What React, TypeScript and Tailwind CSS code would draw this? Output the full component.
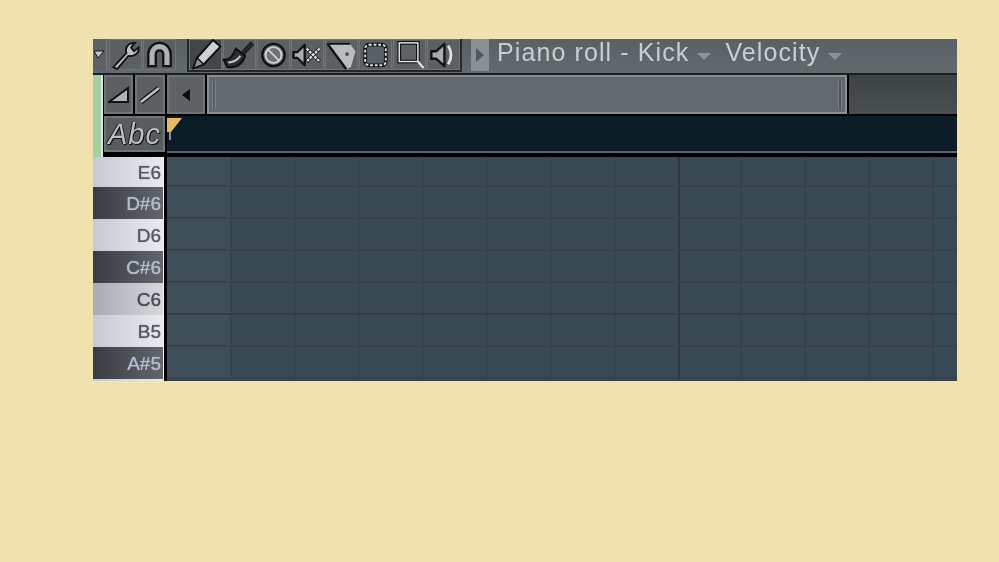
import React from 'react';

const keys = [
  { label: 'E6', h: 'h-[30px]', tone: 'white' },
  { label: 'D#6', h: 'h-[32px]', tone: 'black' },
  { label: 'D6', h: 'h-[32px]', tone: 'white' },
  { label: 'C#6', h: 'h-[32px]', tone: 'black' },
  { label: 'C6', h: 'h-[32px]', tone: 'grey' },
  { label: 'B5', h: 'h-[32px]', tone: 'white' },
  { label: 'A#5', h: 'h-[32px]', tone: 'black' },
  { label: '', h: 'h-[2px]', tone: 'white' },
];

const toneClass: Record<string, string> = {
  white: 'bg-gradient-to-r from-[#c6cad0] to-[#e8eaf0] text-[#565a66]',
  black: 'bg-gradient-to-r from-[#3a3c42] to-[#62666c] text-[#b4bece]',
  grey: 'bg-gradient-to-r from-[#a8abb0] to-[#d6d8dc] text-[#464c58]',
};

const columns = [65, 64, 64, 64, 64, 64, 64, 64, 62, 64, 64, 64, 64, 22];
const rowHeights = [30, 32, 32, 32, 32, 32, 32, 2];

const ToolButton = ({ active, children }: { active?: boolean; children: React.ReactNode }) => (
  <div
    className={
      'flex h-[31px] w-[33px] shrink-0 items-center justify-center border border-[#6e7478] ' +
      (active ? 'bg-[#41464a]' : 'bg-[#5a6064]')
    }
  >
    <svg viewBox="0 0 30 30" className="h-[28px] w-[29px] overflow-visible" fill="none">
      {children}
    </svg>
  </div>
);

const SpeakerShape = () => (
  <path d="M2 11h5l9-8v24l-9-8H2z" fill="#a6abaf" stroke="#101214" strokeWidth="2.5" strokeLinejoin="round" />
);

const Caret = () => (
  <svg viewBox="0 0 14 8" className="h-[8px] w-[14px]">
    <path d="M0 1h14L7 8z" fill="#8d9499" />
  </svg>
);

export default function App() {
  return (
    <div className="h-[562px] w-[999px] overflow-hidden bg-[#efe2b0] pl-[93px] pt-[39px] font-['Liberation_Sans',sans-serif]">
      <div className="flex h-[342px] w-[864px] flex-col overflow-hidden bg-black blur-[0.4px]">
        {/* Toolbar */}
        <div className="flex h-[34px] items-start bg-gradient-to-b from-[#5a6165] to-[#636a6e]">
          <div className="flex h-[31px] w-[14px] shrink-0 items-center justify-end border-r border-[#777d81] bg-[#5c6266]">
            <svg viewBox="0 0 12 10" className="h-[10px] w-[12px]">
              <path d="M0 1h10L4 8z" fill="#c4c8ca" stroke="#111" />
            </svg>
          </div>
          <div className="ml-[2px] flex shrink-0 gap-[1px]">
            <ToolButton>
              <path d="M2 28 16 13c-2-6 2-11 9-11l-4 5 3 4 5-4c1 6-5 10-11 9L6 30z" fill="#bcc1c4" stroke="#101214" strokeWidth="2" />
            </ToolButton>
            <ToolButton>
              <path d="M3 27V14a12 12 0 0 1 24 0v13h-8V14a4 4 0 0 0-8 0v13z" fill="#aeb3b6" stroke="#101214" strokeWidth="2.5" />
            </ToolButton>
          </div>
          <div className="ml-[11px] flex h-[33px] shrink-0 gap-[1px] border-x-2 border-b-2 border-[#25282b]">
            <ToolButton active>
              <path d="m2 29 4-11L23-1l8 7-18 19z" fill="#ccd1d4" stroke="#0c0e10" strokeWidth="2" />
              <path d="m2 29 4-11 7 7z" fill="#8b9093" stroke="#0c0e10" strokeWidth="1.5" />
            </ToolButton>
            <ToolButton>
              <path d="m16 13 11-12 3 3-11 12z" fill="#25282a" stroke="#0c0e10" />
              <path d="M-2 20c6 1 10-4 13-12l10 8c-3 9-10 13-19 12z" fill="#2c2f32" stroke="#0c0e10" strokeWidth="2" />
              <path d="M3 23c6 0 10-3 13-7" stroke="#c4c9cc" strokeWidth="2" />
            </ToolButton>
            <ToolButton>
              <circle cx="15" cy="15" r="12" stroke="#101214" strokeWidth="2.5" fill="#6d7377" />
              <circle cx="15" cy="15" r="8.5" stroke="#d0d4d6" strokeWidth="2" />
              <path d="m9 9 12 12" stroke="#d0d4d6" strokeWidth="2" />
            </ToolButton>
            <ToolButton>
              <path d="M0 12h4l8-8v22l-8-8H0z" fill="#a6abaf" stroke="#101214" strokeWidth="2.5" strokeLinejoin="round" />
              <path d="m14 8 14 14M28 8 14 22" stroke="#101214" strokeWidth="4" />
              <path d="m14 8 14 14M28 8 14 22" stroke="#dde0e2" strokeWidth="2.5" strokeDasharray="3 1" />
            </ToolButton>
            <ToolButton>
              <path d="M0 3h24l6 8-5 17-5 2z" fill="#b8bdc0" />
              <path d="M0 3 20 30" stroke="#101214" strokeWidth="2.5" />
              <path d="M0 3h24" stroke="#101214" strokeWidth="2" />
              <circle cx="21" cy="14" r="2" fill="#4a4f52" />
            </ToolButton>
            <ToolButton>
              <rect x="4" y="4" width="22" height="22" rx="4" stroke="#101214" strokeWidth="4" />
              <rect x="4" y="4" width="22" height="22" rx="4" stroke="#dde0e2" strokeWidth="2" strokeDasharray="3 2" />
            </ToolButton>
            <ToolButton>
              <rect x="4" y="2" width="20" height="20" fill="#5d6367" stroke="#101214" strokeWidth="4" />
              <rect x="4" y="2" width="20" height="20" stroke="#dde0e2" strokeWidth="1.6" />
              <path d="m24 22 6 7" stroke="#dde0e2" strokeWidth="2.5" />
            </ToolButton>
            <ToolButton>
              <SpeakerShape />
              <path d="M20 5c4 6 4 14 0 20" stroke="#dde0e2" strokeWidth="3" />
            </ToolButton>
          </div>
          <div className="ml-[9px] flex h-[32px] w-[18px] shrink-0 items-center justify-center bg-[#8a9094]">
            <svg viewBox="0 0 8 14" className="h-[14px] w-[8px]">
              <path d="M0 0l8 7-8 7z" fill="#53595d" />
            </svg>
          </div>
          <div className="ml-[8px] flex h-[27px] items-center whitespace-nowrap text-[25px] leading-none tracking-[1.1px] text-[#c9ced2]">
            <span>Piano roll - Kick</span>
            <span className="ml-[8px] mt-[6px]"><Caret /></span>
            <span className="ml-[14px]">Velocity</span>
            <span className="ml-[8px] mt-[6px]"><Caret /></span>
          </div>
        </div>

        {/* Scroll row + label row */}
        <div className="flex h-[84px] border-t-2 border-[#1c1f22] bg-black">
          <div className="w-[8px] shrink-0 bg-[#a5d0a5]" />
          <div className="w-[2px] shrink-0 bg-[#dfe8dc]" />
          <div className="ml-[1px] flex min-w-0 flex-1 flex-col">
            <div className="flex h-[41px] items-stretch border-b-2 border-black">
              <div className="flex shrink-0 gap-[2px]">
                <div className="flex w-[29px] items-center justify-center border-2 border-[#6e7478] bg-[#5a6064]">
                  <svg viewBox="0 0 22 18" className="h-[18px] w-[22px]">
                    <path d="M1 16 20 2v14z" fill="#aeb3b6" stroke="#101214" strokeWidth="2" />
                  </svg>
                </div>
                <div className="flex w-[30px] items-center justify-center border-2 border-[#6e7478] bg-[#5a6064]">
                  <svg viewBox="0 0 22 18" className="h-[18px] w-[22px]">
                    <path d="M2 16 20 2" stroke="#101214" strokeWidth="5" />
                    <path d="M2 16 20 2" stroke="#bcc1c4" strokeWidth="2.5" />
                  </svg>
                </div>
              </div>
              <div className="ml-[2px] flex w-[38px] shrink-0 items-center justify-center border-2 border-[#6e7478] bg-[#5c6266]">
                <svg viewBox="0 0 8 12" className="h-[12px] w-[8px]">
                  <path d="M8 0 0 6l8 6z" fill="#0b0d0e" />
                </svg>
              </div>
              <div className="ml-[2px] flex w-[640px] shrink-0 items-center justify-between border-2 border-[#8a9094] bg-[#62686d] px-[3px]">
                <div className="h-[28px] w-[4px] border-x border-[#7d8488] bg-[#565c60]" />
                <div className="h-[28px] w-[4px] border-x border-[#7d8488] bg-[#4c5256]" />
              </div>
              <div className="ml-[2px] flex-1 bg-gradient-to-b from-[#3e4345] to-[#4a4f51]" />
            </div>
            <div className="flex h-[41px]">
              <div className="flex h-[36px] w-[61px] shrink-0 items-center justify-center border-2 border-[#6e7478] bg-[#565c60] text-[29px] italic leading-none tracking-[1px] text-[#bcc1c5] [text-shadow:1px_1px_0_#101214,-1px_0_0_#101214]">
                Abc
              </div>
              <div className="ml-[2px] flex-1">
                <div className="h-[35px] bg-[#0c1c26]">
                  <svg viewBox="0 0 15 24" className="h-[24px] w-[15px]">
                    <path d="M0 2h15L4 16H0z" fill="#e8b766" />
                    <path d="M3 16v8" stroke="#8b9194" strokeWidth="2" />
                  </svg>
                </div>
                <div className="h-[2px] bg-[#5a6468]" />
              </div>
            </div>
          </div>
        </div>

        {/* Piano keys and note grid */}
        <div className="flex min-h-0 flex-1">
          <div className="flex w-[71px] shrink-0 flex-col border-r border-[#f0f2f6]">
            {keys.map((key, i) => (
              <div
                key={i}
                className={`flex items-center justify-end pr-[2px] text-[19px] leading-none [text-shadow:0_0_1px_currentColor] ${key.h} ${toneClass[key.tone]}`}
              >
                {key.label}
              </div>
            ))}
          </div>
          <div className="ml-[3px] min-w-0 flex-1 overflow-hidden bg-[#3a4a54]">
            {rowHeights.map((h, r) => (
              <div key={r} className="flex" style={{ height: h }}>
                {columns.map((w, c) => (
                  <div
                    key={c}
                    style={{ width: w }}
                    className={
                      'shrink-0 border-b-2 border-r-2 ' +
                      (c === 7 ? 'border-r-[#2a3943] ' : 'border-r-[#35454f] ') +
                      (r === 4 ? 'border-b-[#2f3e48] ' : 'border-b-[#35444e] ') +
                      (c === 0 ? 'bg-[#3f4f59]' : '')
                    }
                  />
                ))}
              </div>
            ))}
          </div>
        </div>
      </div>
    </div>
  );
}
